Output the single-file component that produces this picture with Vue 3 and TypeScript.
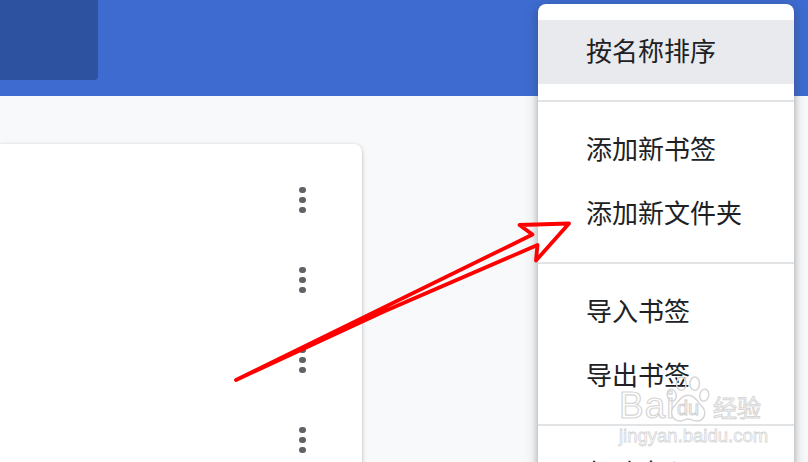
<script setup lang="ts">
const groups: string[][] = [
  ['按名称排序'],
  ['添加新书签', '添加新文件夹'],
  ['导入书签', '导出书签'],
  ['帮助中心'],
]
const rows: number[] = [1, 2, 3, 4]
</script>

<template>
  <div class="page">
    <header class="topbar">
      <div class="search"></div>
    </header>
    <main class="content">
      <section class="card">
        <div v-for="r in rows" :key="r" class="row">
          <span class="kebab"><i></i><i></i><i></i></span>
        </div>
      </section>
    </main>

    <nav class="menu">
      <div v-for="(g, gi) in groups" :key="gi" class="group">
        <div v-for="(item, ii) in g" :key="item" class="item" :class="{ hover: gi === 0 && ii === 0 }">{{ item }}</div>
      </div>
    </nav>

    <svg class="arrow" width="808" height="462" viewBox="0 0 808 462">
      <path d="M236 380 L532.5 234.5 L519.5 225 L569 223.5 L536 260.5 L537.5 245 L385 311 Z" fill="none" stroke="#ff0000" stroke-width="3.8" stroke-linejoin="round" stroke-linecap="round" />
    </svg>

    <div class="watermark">
      <div class="brand">
        <span class="bai">Bai</span>
        <span class="paw">
          <svg width="44" height="46" viewBox="0 0 46 48" fill="none" stroke="#d6d6d6" stroke-width="1.5">
            <ellipse cx="6" cy="20" rx="4.6" ry="6.4" transform="rotate(-12 6 20)" />
            <ellipse cx="16" cy="8" rx="5" ry="7" />
            <ellipse cx="30" cy="8" rx="5" ry="7" />
            <ellipse cx="40" cy="20" rx="4.6" ry="6.4" transform="rotate(12 40 20)" />
            <path d="M23 20 C16 20 14 26 9 31 C3 37 6 47 15 47 C19 47 20 45 23 45 C26 45 28 47 32 47 C41 47 43 37 37 31 C32 26 30 20 23 20 Z" fill="rgba(255,255,255,0.6)" />
          </svg>
          <span class="du">du</span>
        </span>
        <span class="jy">经验</span>
      </div>
      <div class="url">jingyan.baidu.com</div>
    </div>
  </div>
</template>

<style scoped>
.page {
  position: relative;
  width: 808px;
  height: 462px;
  overflow: hidden;
  background: #f8f9fa;
  font-family: "Noto Sans CJK SC", "Liberation Sans", sans-serif;
}
.topbar {
  height: 96px;
  background: #3d6bd0;
}
.search {
  width: 98px;
  height: 80px;
  background: #2d52a0;
  border-radius: 0 0 4px 0;
}
.content {
  padding-top: 48px;
}
.card {
  width: 362px;
  padding: 16px 0;
  background: #fff;
  border-radius: 0 8px 8px 0;
  box-shadow: 0 1px 3px rgba(60, 64, 67, 0.3), 0 2px 6px rgba(60, 64, 67, 0.12);
}
.row {
  height: 80px;
  display: flex;
  align-items: center;
  justify-content: flex-end;
  padding-right: 56.5px;
}
.kebab {
  display: flex;
  flex-direction: column;
  gap: 3.4px;
}
.kebab i {
  display: block;
  width: 6.6px;
  height: 6.6px;
  border-radius: 50%;
  background: #5f6368;
}
.menu {
  position: absolute;
  left: 538px;
  top: 4px;
  width: 256px;
  background: #fff;
  border-radius: 8px;
  box-shadow: 0 2px 6px rgba(60, 64, 67, 0.3), 0 4px 14px rgba(60, 64, 67, 0.25);
}
.group {
  padding: 16px 0;
}
.group + .group {
  border-top: 2px solid #e2e3e5;
}
.item {
  height: 64px;
  line-height: 60px;
  padding-left: 48px;
  font-size: 26px;
  color: #202124;
  white-space: nowrap;
}
.item.hover {
  background: #e8eaed;
}
.arrow {
  position: absolute;
  left: 0;
  top: 0;
  pointer-events: none;
}
.watermark {
  position: absolute;
  left: 619px;
  top: 376px;
  width: 150px;
  color: rgba(255, 255, 255, 0.6);
  font-family: "Liberation Sans", "Noto Sans CJK SC", sans-serif;
}
.brand {
  display: flex;
  align-items: flex-start;
  height: 48px;
}
.bai {
  width: 47px;
  margin-top: 12px;
  font-size: 37px;
  line-height: 36px;
  letter-spacing: 1px;
  -webkit-text-stroke: 1.2px #d6d6d6;
}
.paw {
  position: relative;
  display: block;
  width: 46px;
  height: 46px;
}
.du {
  position: absolute;
  left: 11px;
  top: 20px;
  font-size: 20px;
  line-height: 24px;
  -webkit-text-stroke: 1px #d2d2d2;
}
.jy {
  margin-top: 16px;
  margin-left: 1px;
  font-size: 24px;
  line-height: 30px;
  font-family: "Noto Sans CJK SC", sans-serif;
  -webkit-text-stroke: 1px #d6d6d6;
}
.url {
  margin-top: 2px;
  font-size: 18.5px;
  line-height: 20px;
  white-space: nowrap;
  -webkit-text-stroke: 0.8px #d6d6d6;
}
</style>

<style>
html, body { margin: 0; padding: 0; }
</style>
